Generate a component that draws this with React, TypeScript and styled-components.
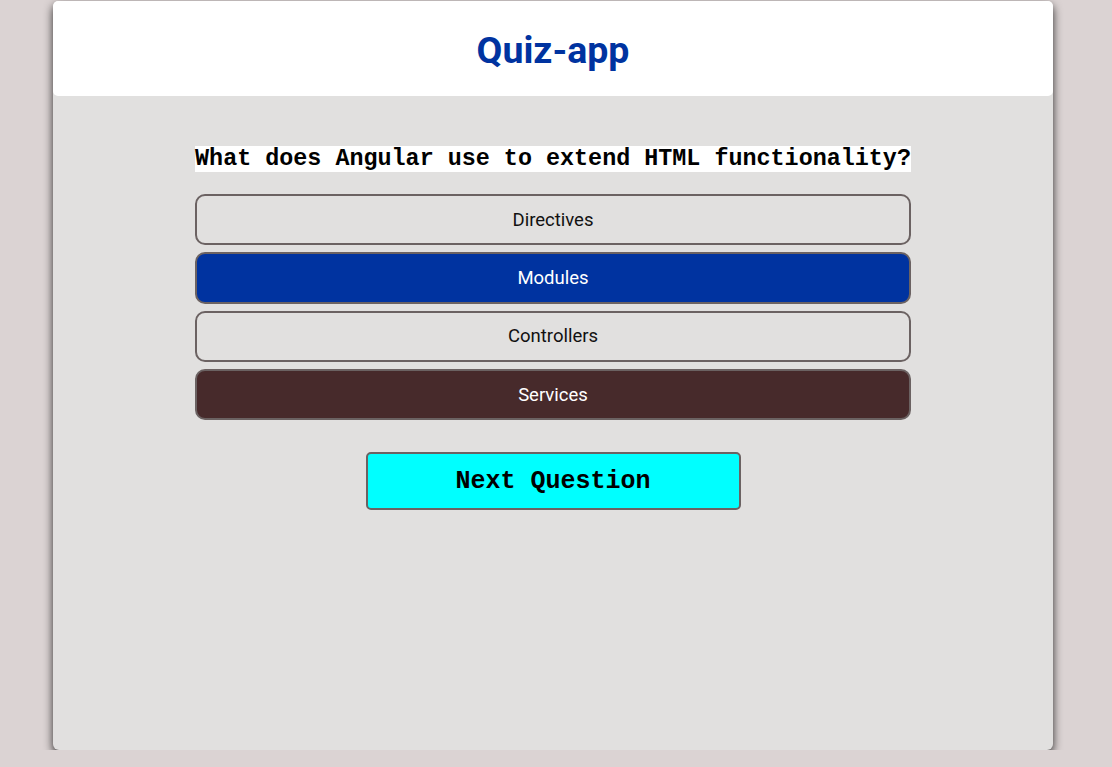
import React from "react";
import styled, { createGlobalStyle } from "styled-components";

const GlobalStyle = createGlobalStyle`
  html, body {
    margin: 0;
    padding: 0;
    background: #dbd3d3;
    font-family: Roboto, "Liberation Sans", sans-serif;
  }
  body {
    padding: 1px 0 0 53px;
  }
`;

const Card = styled.div`
  width: 1000px;
  height: 749px;
  background: #e1e0df;
  border-radius: 6px;
  box-shadow: 0 4px 10px rgba(0, 0, 0, 0.8);
  display: flex;
  flex-direction: column;
`;

const Header = styled.header`
  height: 95px;
  background: #ffffff;
  border-radius: 5px;
  display: flex;
  align-items: center;
  justify-content: center;
`;

const Title = styled.h1`
  margin: 0;
  font-family: Roboto, "Liberation Sans", sans-serif;
  font-weight: 700;
  font-size: 37.5px;
  color: #0033a0;
  padding-top: 2px;
`;

const Main = styled.main`
  display: flex;
  flex-direction: column;
  align-items: center;
  padding-top: 50px;
`;

const Question = styled.h3`
  margin: 0 0 22px;
  width: 716px;
  text-align: center;
  font-family: "Liberation Mono", "Courier New", monospace;
  font-weight: 700;
  font-size: 23.4px;
  line-height: normal;
`;

const QuestionText = styled.span`
  background: #ffffff;
  color: #000000;
`;

const Answers = styled.div`
  width: 716px;
  display: flex;
  flex-direction: column;
  gap: 7px;
`;

type Variant = "default" | "selected" | "wrong";

const bg: Record<Variant, string> = {
  default: "#e1e0df",
  selected: "#0033a0",
  wrong: "#472a2b",
};

const AnswerButton = styled.button<{ $variant: Variant }>`
  box-sizing: border-box;
  height: 51.3px;
  width: 100%;
  border: 2px solid #6b6262;
  border-radius: 10px;
  background: ${(p) => bg[p.$variant]};
  color: ${(p) => (p.$variant === "default" ? "#111111" : "#ffffff")};
  font-family: Roboto, "Liberation Sans", sans-serif;
  font-size: 18.5px;
  cursor: pointer;
`;

const NextButton = styled.button`
  box-sizing: border-box;
  margin-top: 32px;
  width: 375px;
  height: 58px;
  background: #00ffff;
  border: 2px solid #6b6262;
  border-radius: 5px;
  font-family: "Liberation Mono", "Courier New", monospace;
  font-weight: 700;
  font-size: 25px;
  color: #000000;
  cursor: pointer;
`;

const answers: { text: string; variant: Variant }[] = [
  { text: "Directives", variant: "default" },
  { text: "Modules", variant: "selected" },
  { text: "Controllers", variant: "default" },
  { text: "Services", variant: "wrong" },
];

export default function App() {
  return (
    <>
      <GlobalStyle />
      <Card>
        <Header>
          <Title>Quiz-app</Title>
        </Header>
        <Main>
          <Question>
            <QuestionText>What does Angular use to extend HTML functionality?</QuestionText>
          </Question>
          <Answers>
            {answers.map((a) => (
              <AnswerButton key={a.text} $variant={a.variant}>
                {a.text}
              </AnswerButton>
            ))}
          </Answers>
          <NextButton>Next Question</NextButton>
        </Main>
      </Card>
    </>
  );
}
